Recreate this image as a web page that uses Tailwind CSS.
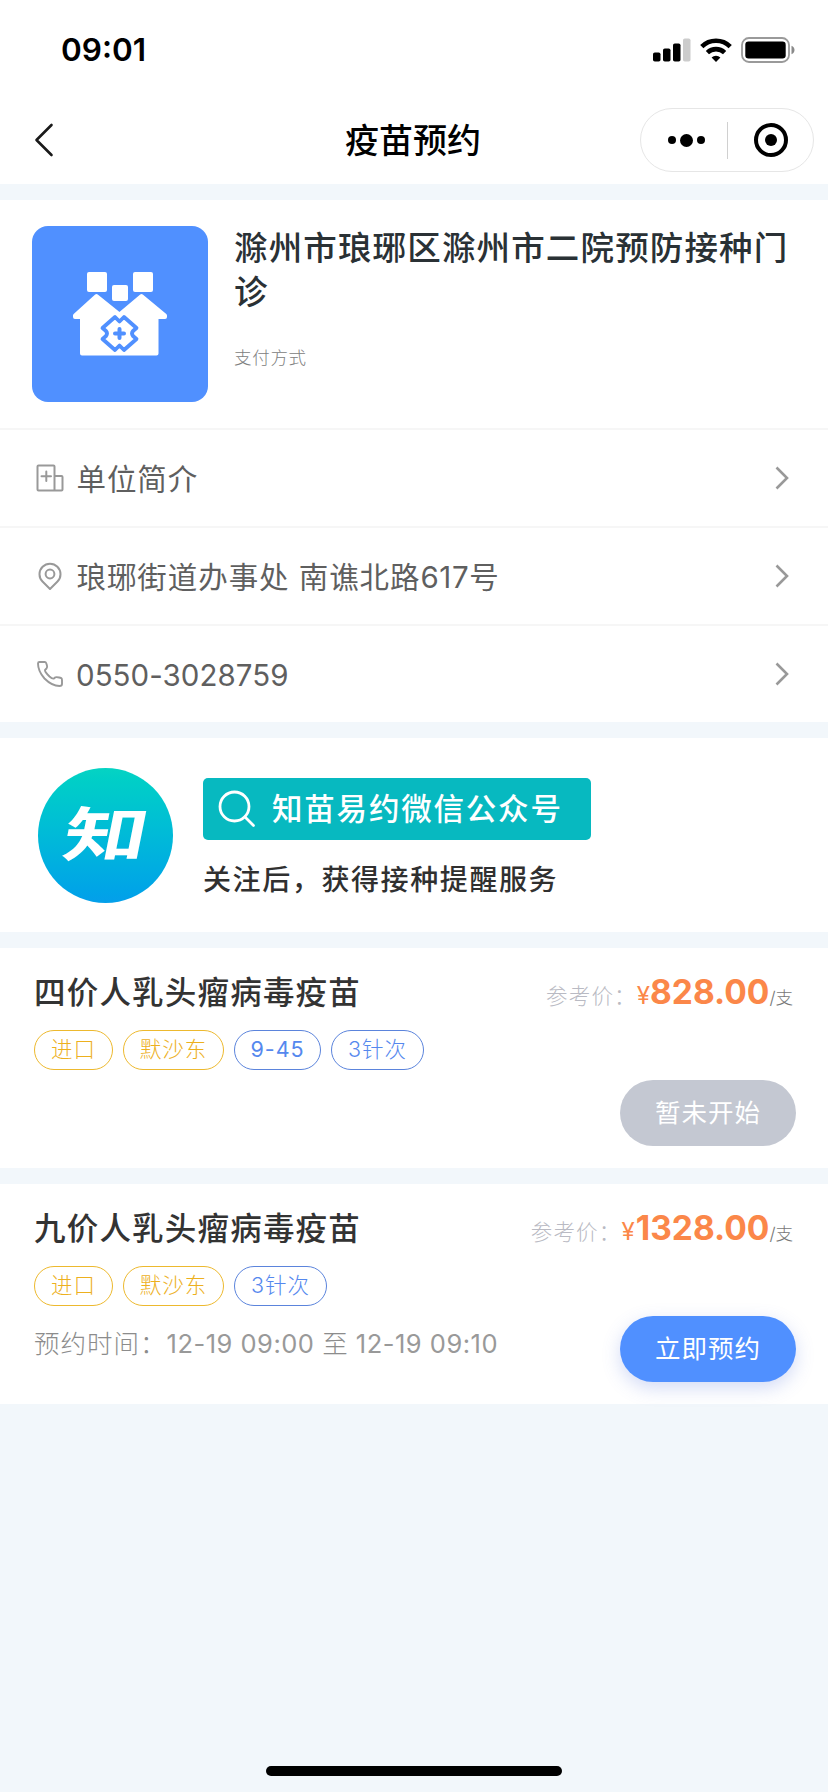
<!DOCTYPE html>
<html lang="zh-CN">
<head>
<meta charset="utf-8">
<title>疫苗预约</title>
<script src="https://cdn.jsdelivr.net/npm/@tailwindcss/browser@4"></script>
</head>
<body class="bg-[#f2f7fb]">
<div class="w-[828px] h-[1792px] overflow-hidden flex flex-col bg-[#f2f7fb] whitespace-nowrap font-['Inter','Noto_Sans_CJK_SC',sans-serif]">

  <header class="h-[184px] shrink-0 bg-white text-black">
    <div class="h-[96px] flex items-center justify-between pl-[61px] pr-[33px] pt-[3px]">
      <div class="text-[31.5px] leading-none font-semibold">09:01</div>
      <div class="flex items-center gap-[9px]">
        <svg width="38" height="24" viewBox="0 0 38 24"><rect x="0" y="14.5" width="7.5" height="9" rx="1.8"/><rect x="10" y="10.5" width="7.5" height="13" rx="1.8"/><rect x="20" y="5.5" width="7.5" height="18" rx="1.8"/><rect x="30" y=".5" width="7.5" height="23" rx="1.8" fill="#ccc"/></svg>
        <svg width="32" height="24" viewBox="0 0 32 24" fill="none" stroke="#000" stroke-width="4.6"><path d="M1.8 8.6A20.2 20.2 0 0 1 30.2 8.6"/><path d="M7.4 14.6A12.4 12.4 0 0 1 24.6 14.6"/><path d="M16 24L11.6 19.5A6.5 6.5 0 0 1 20.4 19.5Z" fill="#000" stroke="none"/></svg>
        <svg width="54" height="26" viewBox="0 0 54 26"><rect x="1" y="1" width="47" height="24" rx="7" fill="none" stroke="#9a9a9a" stroke-width="1.8"/><rect x="4.3" y="4.5" width="40.4" height="17" rx="3.2"/><path d="M50.5 8.8C54.5 10.5 54.5 15.5 50.5 17.2Z" fill="#8a8a8a"/></svg>
      </div>
    </div>
    <div class="h-[88px] flex items-center justify-between pl-[34px] pr-[14px]">
      <div class="w-[174px]"><svg width="20" height="36" viewBox="0 0 20 36" fill="none" stroke="#1a1a1a" stroke-width="2.6" stroke-linecap="round" stroke-linejoin="round"><path d="M17.5 3L2.5 18L17.5 33"/></svg></div>
      <h1 class="text-[34px] leading-none font-medium pr-[22px] pt-[2px]">疫苗预约</h1>
      <div class="w-[174px] h-[64px] rounded-full border border-[#e6e6e6] flex items-center">
        <div class="w-[86px] flex items-center justify-center gap-[4px] pl-[4px]">
          <span class="size-[8px] rounded-full bg-black"></span><span class="size-[13px] rounded-full bg-black"></span><span class="size-[8px] rounded-full bg-black"></span>
        </div>
        <div class="w-px h-[37px] bg-[#d0d0d0]"></div>
        <div class="flex-1 flex justify-center"><svg width="36" height="36" viewBox="0 0 36 36"><circle cx="18" cy="18" r="15" fill="none" stroke="#000" stroke-width="4"/><circle cx="18" cy="18" r="6"/></svg></div>
      </div>
    </div>
  </header>

  <section class="mt-4 h-[522px] shrink-0 bg-white">
    <div class="h-[228px] pt-[26px] pl-8 flex gap-[26px]">
      <div class="size-[176px] rounded-[16px] bg-[#5090ff]">
        <svg width="176" height="176" viewBox="0 0 176 176" fill="#fff">
          <rect x="55" y="46" width="20" height="20" rx="2"/><rect x="101" y="46" width="20" height="20" rx="2"/><rect x="80" y="59" width="16" height="16" rx="2"/>
          <path stroke="#fff" stroke-width="4" stroke-linejoin="round" d="M64.5 70L43 89.5V91H50V127.5H124.5V91H133V89.5L109.5 70L87.5 88.5Z"/>
          <path fill="#fff" stroke="#5090ff" stroke-width="3.8" stroke-linejoin="round" d="M83 91L87.5 95.5L92 91L104.500 102L101 105Q99 107.500 101 110L104.500 113L92 124L87.5 119.5L83 124L70.500 113L74 110Q76 107.500 74 105L70.500 102Z"/>
          <path fill="none" stroke="#5090ff" stroke-width="4" stroke-linecap="round" d="M87.5 103V112M83 107.5H92"/>
        </svg>
      </div>
      <div class="pt-px">
        <h2 class="text-[33.5px] leading-[43.5px] tracking-[1.15px] font-medium text-[#2a3135]">滁州市琅琊区滁州市二院预防接种门<br>诊</h2>
        <p class="mt-[32px] text-[17.5px] leading-[24px] tracking-[0.7px] font-light text-[#808080]">支付方式</p>
      </div>
    </div>
    <div class="h-[98px] border-t-2 border-[#f6f6f6] flex items-center pl-[36px] pr-[39px] text-[#5f5f5f] text-[29.5px] tracking-[0.93px]">
      <svg width="28" height="28" viewBox="0 0 28 28" fill="none" stroke="#999" stroke-width="2" stroke-linejoin="round" stroke-linecap="round"><path d="M18.5 26.5H2.5Q1.5 26.5 1.5 25.5V2.5Q1.5 1.5 2.5 1.5H17.5Q18.5 1.5 18.5 2.5ZM18.5 12H25.5Q26.5 12 26.5 13V25.5Q26.5 26.5 25.5 26.5H18.5M10.3 7.5V17M5.5 12.3H15"/></svg>
      <span class="ml-[12.5px] pt-[3px] flex-1">单位简介</span>
      <svg width="14" height="24" viewBox="0 0 14 24" fill="none" stroke="#999" stroke-width="2.6"><path d="M1.5 1.5L12 12L1.5 22.5"/></svg>
    </div>
    <div class="h-[98px] border-t-2 border-[#f6f6f6] flex items-center pl-[36px] pr-[39px] text-[#5f5f5f] text-[29.5px] tracking-[0.93px]">
      <svg width="28" height="28" viewBox="0 0 28 28" fill="none" stroke="#999" stroke-width="2" stroke-linejoin="round"><path d="M14 27L6.5 19.5A10.5 10.5 0 1 1 21.5 19.5Z"/><circle cx="14" cy="12" r="4.4"/></svg>
      <span class="ml-[12.5px] pt-[3px] flex-1">琅琊街道办事处 南谯北路<span class="tracking-[0.6px]">617</span>号</span>
      <svg width="14" height="24" viewBox="0 0 14 24" fill="none" stroke="#999" stroke-width="2.6"><path d="M1.5 1.5L12 12L1.5 22.5"/></svg>
    </div>
    <div class="h-[98px] border-t-2 border-[#f6f6f6] flex items-center pl-[36px] pr-[39px] text-[#5f5f5f] text-[29.5px] tracking-[0.04px]">
      <svg width="28" height="28" viewBox="0 0 28 28" fill="none" stroke="#999" stroke-width="1.9" stroke-linejoin="round"><path d="M3.5 2H9C10 2 10.2 2.8 10.5 4C11 6 12 7 10.5 8.5L9 10C8.6 11 11 14 13.5 16.5C16 18.8 17 19 18 18.5L19 17.5C20 16.5 21.5 17.2 25 18C26 18.3 26 19 26 20V24C26 25.5 25 26 23.5 26C18 26 12.5 22.5 8.5 18.5C4.5 14 2 8.5 2 3.5C2 2.5 2.5 2 3.5 2Z"/></svg>
      <span class="ml-[12px] pt-[3px] flex-1">0550-3028759</span>
      <svg width="14" height="24" viewBox="0 0 14 24" fill="none" stroke="#999" stroke-width="2.6"><path d="M1.5 1.5L12 12L1.5 22.5"/></svg>
    </div>
  </section>

  <section class="mt-4 h-[194px] shrink-0 bg-white flex items-start pl-[37.5px] pt-[29.5px]">
    <div class="size-[135px] rounded-full bg-linear-to-b from-[#05d3c3] to-[#049fea] flex items-center justify-center text-white">
      <span class="-skew-x-[8deg] scale-x-[1.42] text-[59px] leading-none font-bold -mt-[2px] ml-[3px]">知</span>
    </div>
    <div class="ml-[30.5px] pt-[10.5px]">
      <div class="w-[388px] h-[62px] rounded-[5px] bg-[#07b9c0] flex items-center pl-[15px] text-white">
        <svg width="38" height="38" viewBox="0 0 38 38" fill="none" stroke="#fff" stroke-width="2.8" stroke-linecap="round"><circle cx="16.5" cy="16.5" r="14.5"/><path d="M27 27L35.5 35.5"/></svg>
        <span class="ml-[16px] text-[30.5px] leading-none tracking-[1.8px] font-medium">知苗易约微信公众号</span>
      </div>
      <p class="mt-[22.5px] text-[28px] leading-[34px] tracking-[1.6px] font-medium text-[#303030]">关注后，获得接种提醒服务</p>
    </div>
  </section>

  <section class="mt-4 h-[220px] shrink-0 bg-white pt-[21px] pl-[34px] pr-8">
    <div class="h-[47px] flex items-baseline justify-between pr-[3px]">
      <h3 class="text-[31.5px] leading-[46px] tracking-[1.2px] font-medium text-[#333]">四价人乳头瘤病毒疫苗</h3>
      <div class="flex items-baseline leading-[46px]"><span class="text-[21.5px] tracking-[1.2px] font-light text-[#b9bac3]">参考价：</span><span class="text-[24px] text-[#fb8749]">¥</span><span class="text-[33.5px] font-bold text-[#fb8749]">828.00</span><span class="text-[17.5px] font-light text-[#777]">/支</span></div>
    </div>
    <div class="mt-[14px] flex gap-[10px] text-[21.5px] leading-none tracking-[1px] font-light">
      <span class="w-[79px] h-[40px] rounded-full border border-[#edb92e] text-[#edb01e] flex items-center justify-center">进口</span>
      <span class="w-[101px] h-[40px] rounded-full border border-[#edb92e] text-[#edb01e] flex items-center justify-center">默沙东</span>
      <span class="w-[87px] h-[40px] rounded-full border border-[#5b84dc] text-[#5588ee] flex items-center justify-center font-normal">9-45</span>
      <span class="w-[93px] h-[40px] rounded-full border border-[#5b84dc] text-[#5588ee] flex items-center justify-center">3针次</span>
    </div>
    <div class="mt-[10px] flex justify-end"><button class="w-[176px] h-[66px] rounded-full bg-[#c4c8d2] text-white text-[25.5px] tracking-[1px] pt-[1px]">暂未开始</button></div>
  </section>

  <section class="mt-4 h-[220px] shrink-0 bg-white pt-[21px] pl-[34px] pr-8">
    <div class="h-[47px] flex items-baseline justify-between pr-[3px]">
      <h3 class="text-[31.5px] leading-[46px] tracking-[1.2px] font-medium text-[#333]">九价人乳头瘤病毒疫苗</h3>
      <div class="flex items-baseline leading-[46px]"><span class="text-[21.5px] tracking-[1.2px] font-light text-[#b9bac3]">参考价：</span><span class="text-[24px] mr-[1px] text-[#fb8749]">¥</span><span class="text-[33.5px] font-bold text-[#fb8749]">1328.00</span><span class="text-[17.5px] font-light text-[#777]">/支</span></div>
    </div>
    <div class="mt-[14px] flex gap-[10px] text-[21.5px] leading-none tracking-[1px] font-light">
      <span class="w-[79px] h-[40px] rounded-full border border-[#edb92e] text-[#edb01e] flex items-center justify-center">进口</span>
      <span class="w-[101px] h-[40px] rounded-full border border-[#edb92e] text-[#edb01e] flex items-center justify-center">默沙东</span>
      <span class="w-[93px] h-[40px] rounded-full border border-[#5b84dc] text-[#5588ee] flex items-center justify-center">3针次</span>
    </div>
    <div class="mt-[10px] flex justify-between">
      <p class="pt-[9px] text-[25.5px] leading-[38px] tracking-[0.5px] text-[#999]"><span class="tracking-[1px] font-light text-[#8c8c8c]">预约时间：</span>12-19 09:00 <span class="font-light text-[#8c8c8c]">至</span> 12-19 09:10</p>
      <button class="w-[176px] h-[66px] rounded-full bg-[#5090ff] text-white text-[25.5px] tracking-[1px] pt-[1px] shadow-[0_6px_18px_rgba(80,110,220,0.25)]">立即预约</button>
    </div>
  </section>

  <div class="mt-auto mb-4 mx-auto w-[296px] h-[10px] shrink-0 rounded-full bg-black"></div>
</div>
</body>
</html>
